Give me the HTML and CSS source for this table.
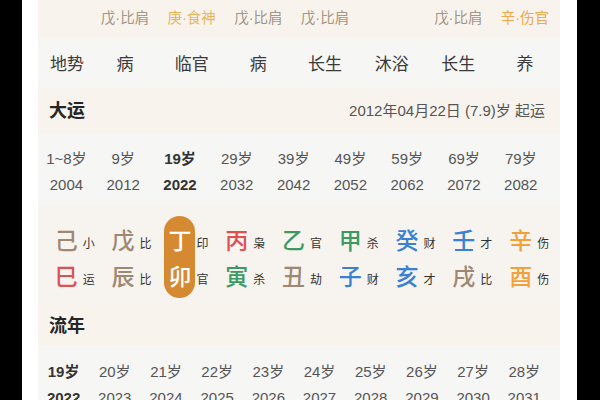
FILE: index.html
```html
<!DOCTYPE html>
<html lang="zh">
<head>
<meta charset="utf-8">
<link rel="stylesheet" href="styles.css">
</head>
<body>
<div class="frame">
  <div class="panel">
    <div class="row8 top">
      <div></div>
      <div class="muted">戊·比肩</div>
      <div class="gold">庚·食神</div>
      <div class="muted">戊·比肩</div>
      <div class="muted">戊·比肩</div>
      <div></div>
      <div class="muted">戊·比肩</div>
      <div class="gold2">辛·伤官</div>
    </div>
    <div class="row8 dishi">
      <div class="lab">地势</div>
      <div>病</div>
      <div>临官</div>
      <div>病</div>
      <div>长生</div>
      <div>沐浴</div>
      <div>长生</div>
      <div>养</div>
    </div>
    <div class="head">
      <span class="title">大运</span>
      <span class="date">2012年04月22日 (7.9)岁 起运</span>
    </div>
    <div class="dy">
      <div class="grid9 ages">
        <div>1~8岁</div><div>9岁</div><div class="cur">19岁</div><div>29岁</div><div>39岁</div><div>49岁</div><div>59岁</div><div>69岁</div><div>79岁</div>
      </div>
      <div class="grid9 years">
        <div>2004</div><div>2012</div><div class="cur">2022</div><div>2032</div><div>2042</div><div>2052</div><div>2062</div><div>2072</div><div>2082</div>
      </div>
    </div>
    <div class="gz grid9">
      <div class="gzc"><div class="bigs"><span class="earth">己</span><span class="fire">巳</span></div><div class="sms"><span>小</span><span>运</span></div></div>
      <div class="gzc"><div class="bigs"><span class="earth">戊</span><span class="earth">辰</span></div><div class="sms"><span>比</span><span>比</span></div></div>
      <div class="gzc"><div class="bigs on"><span>丁</span><span>卯</span></div><div class="sms"><span>印</span><span>官</span></div></div>
      <div class="gzc"><div class="bigs"><span class="fire">丙</span><span class="wood">寅</span></div><div class="sms"><span>枭</span><span>杀</span></div></div>
      <div class="gzc"><div class="bigs"><span class="wood">乙</span><span class="earth">丑</span></div><div class="sms"><span>官</span><span>劫</span></div></div>
      <div class="gzc"><div class="bigs"><span class="wood">甲</span><span class="water">子</span></div><div class="sms"><span>杀</span><span>财</span></div></div>
      <div class="gzc"><div class="bigs"><span class="water">癸</span><span class="water">亥</span></div><div class="sms"><span>财</span><span>才</span></div></div>
      <div class="gzc"><div class="bigs"><span class="water">壬</span><span class="earth">戌</span></div><div class="sms"><span>才</span><span>比</span></div></div>
      <div class="gzc"><div class="bigs"><span class="metal">辛</span><span class="metal">酉</span></div><div class="sms"><span>伤</span><span>伤</span></div></div>
    </div>
    <div class="head head2">
      <span class="title">流年</span>
    </div>
    <div class="ln">
      <div class="grid10 ages">
        <div class="cur">19岁</div><div>20岁</div><div>21岁</div><div>22岁</div><div>23岁</div><div>24岁</div><div>25岁</div><div>26岁</div><div>27岁</div><div>28岁</div>
      </div>
      <div class="grid10 years">
        <div class="cur">2022</div><div>2023</div><div>2024</div><div>2025</div><div>2026</div><div>2027</div><div>2028</div><div>2029</div><div>2030</div><div>2031</div>
      </div>
    </div>
  </div>
</div>
</body>
</html>
```
FILE: styles.css
```css
html, body {
  margin: 0;
  padding: 0;
}
body {
  background: #000;
  width: 600px;
  height: 400px;
  overflow: hidden;
  font-family: "Noto Sans CJK SC", "Noto Sans", sans-serif;
  color: #333;
}
.frame {
  margin-left: 22px;
  width: 555px;
  height: 400px;
  background: #fff;
  padding-left: 16px;
  box-sizing: border-box;
}
.panel {
  width: 522px;
}
.row8 {
  display: grid;
  grid-template-columns: 53.7px repeat(7, 66.67px);
  align-items: center;
  text-align: center;
  box-sizing: border-box;
}
.top {
  height: 39px;
  padding-bottom: 6px;
  background: #f8f3ed;
  font-size: 14.5px;
  font-family: "Liberation Sans", "Noto Sans CJK SC", sans-serif;
}
.top .muted { color: #a39684; }
.top .gold { color: #e8b65a; }
.top .gold2 { color: #eca84c; }
.dishi {
  height: 49px;
  padding-bottom: 3px;
  background: #f6f6f5;
  font-size: 17px;
  color: #3a3a3a;
}
.dishi .lab {
  text-align: left;
  padding-left: 12px;
}
.head {
  height: 45px;
  background: #f8f3ed;
  display: flex;
  align-items: center;
  justify-content: space-between;
  padding: 0 15px 3px 11px;
  box-sizing: border-box;
}
.title {
  font-size: 18px;
  font-weight: bold;
  color: #262626;
}
.date {
  font-family: "Liberation Sans", "Noto Sans CJK SC", sans-serif;
  font-size: 15px;
  color: #555;
}
.dy {
  background: #f6f6f5;
  height: 72px;
  padding-top: 13px;
  box-sizing: border-box;
}
.grid9 {
  display: grid;
  grid-template-columns: repeat(9, 56.8px);
  text-align: center;
}
.grid10 {
  display: grid;
  grid-template-columns: repeat(10, 51.2px);
  text-align: center;
}
.ages, .years {
  font-family: "Liberation Sans", "Noto Sans CJK SC", sans-serif;
  font-size: 15px;
  color: #555;
  height: 26px;
  line-height: 26px;
}
.cur {
  font-weight: bold;
  color: #333;
}
.gz {
  background: #f7f3ef;
  height: 100px;
  padding-top: 11px;
  box-sizing: border-box;
  align-items: start;
  align-content: start;
}
.gzc {
  display: grid;
  grid-template-columns: 1fr 31px 1fr;
  align-items: start;
}
.bigs {
  grid-column: 2;
  display: flex;
  flex-direction: column;
  align-items: center;
  padding: 5px 0;
  border-radius: 16px;
}
.bigs span {
  font-size: 23px;
  line-height: 36px;
  font-weight: 500;
}
.bigs.on {
  background: #d58a32;
  color: #fff;
}
.sms {
  grid-column: 3;
  display: flex;
  flex-direction: column;
  padding: 5px 0;
  text-align: left;
}
.sms span {
  font-size: 12px;
  line-height: 36px;
  padding-top: 4px;
  height: 36px;
  box-sizing: border-box;
  color: #333;
  padding-left: 1px;
}
.earth { color: #9e8872; }
.fire { color: #e0504f; }
.wood { color: #3b9a64; }
.water { color: #3a80d4; }
.metal { color: #f2a13a; }
.head2 {
  height: 40px;
  background: #f8f3ed;
}
.ln {
  background: #f6f6f5;
  height: 60px;
  padding-top: 14px;
  box-sizing: border-box;
}
```
